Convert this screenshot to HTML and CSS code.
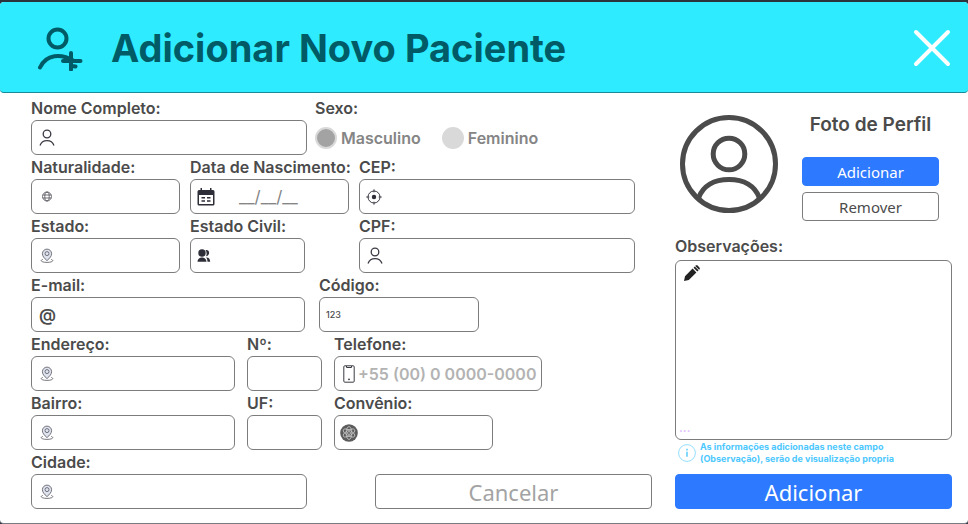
FILE: index.html
```html
<!DOCTYPE html>
<html lang="pt-BR">
<head>
<meta charset="utf-8">
<meta name="viewport" content="width=device-width, initial-scale=1">
<title>Adicionar Novo Paciente</title>
<link rel="stylesheet" href="styles.css">
</head>
<body>
<svg class="sprite" aria-hidden="true">
  <symbol id="user" viewBox="0 0 16 18"><circle cx="8" cy="5" r="3.8"/><path d="M1 16.400c1.200-3.200 3.800-4.800 7-4.800s5.800 1.600 7 4.800"/></symbol>
  <symbol id="pin" viewBox="0 0 14 16"><path class="pin-body" d="M7 12.600C4.200 10.300 2.400 8 2.400 5.700a4.600 4.600 0 0 1 9.200 0c0 2.300-1.800 4.600-4.600 6.900z"/><circle cx="7" cy="5.600" r="2"/><path d="M2.800 11.400C-.4 12.400 1.500 14.400 7 14.400s7.400-2 4.200-3"/></symbol>
</svg>
<main class="dialog">
  <header class="header">
    <svg class="header-icon" viewBox="0 0 46 46" aria-hidden="true"><circle cx="20.500" cy="13.500" r="9"/><path d="M3 42.500C9 29 24 28 37 36M34 28v16.500M26 36h17.500M35 41l3.500.5"/></svg>
    <h1 class="title">Adicionar Novo Paciente</h1>
    <button class="close" type="button" aria-label="Fechar"><svg viewBox="0 0 38 38"><path d="M3 3l32 32M35 3L3 35"/></svg></button>
  </header>
  <form class="form">
    <div class="fields">
      <div class="row row-name">
        <div class="field">
          <label for="nome">Nome Completo:</label>
          <div class="box"><svg class="icon icon-user"><use href="#user"/></svg><input id="nome" type="text"></div>
        </div>
        <fieldset class="field">
          <legend>Sexo:</legend>
          <div class="choices">
            <label class="choice"><input type="radio" name="sexo" checked>Masculino</label>
            <label class="choice"><input type="radio" name="sexo">Feminino</label>
          </div>
        </fieldset>
      </div>
      <div class="row row-birth">
        <div class="field">
          <label for="naturalidade">Naturalidade:</label>
          <div class="box"><svg class="icon icon-thin" viewBox="0 0 16 16"><circle cx="8" cy="7.500" r="4.500"/><ellipse cx="8" cy="7.500" rx="2.200" ry="4.500"/><path d="M3.800 6h8.400M3.800 9h8.400"/></svg><input id="naturalidade" type="text"></div>
        </div>
        <div class="field">
          <label for="nascimento">Data de Nascimento:</label>
          <div class="box box-tight"><svg class="icon icon-calendar" viewBox="0 0 18 18"><path class="solid" fill-rule="evenodd" d="M3.500 0H5v2h8V0h1.500v2H16a1.500 1.500 0 0 1 1.500 1.500V16a1.500 1.500 0 0 1-1.500 1.500H2A1.500 1.500 0 0 1 .5 16V3.500A1.500 1.500 0 0 1 2 2h1.500zM2 7v9h14V7z"/><path class="solid" d="M4.500 9h3.500v1.500H4.500zM10 9h3.500v1.500H10zM4.500 12.300h3.500v1.500H4.500zM10 12.300h3.500v1.500H10z"/></svg><input class="date" id="nascimento" type="text" placeholder="__/__/__"></div>
        </div>
        <div class="field">
          <label for="cep">CEP:</label>
          <div class="box box-tight"><svg class="icon icon-target" viewBox="0 0 16 16"><circle cx="8" cy="8" r="6"/><circle class="solid" cx="8" cy="8" r="2.200"/><path d="M8 .3v3M8 12.700v3M.3 8h3M12.700 8h3"/></svg><input id="cep" type="text"></div>
        </div>
      </div>
      <div class="row row-state">
        <div class="field">
          <label for="estado">Estado:</label>
          <div class="box"><svg class="icon icon-pin"><use href="#pin"/></svg><input id="estado" type="text"></div>
        </div>
        <div class="field">
          <label for="civil">Estado Civil:</label>
          <div class="box box-tight"><svg class="icon icon-couple" viewBox="0 0 14 16"><circle class="solid" cx="5" cy="5" r="3.700"/><path class="solid" d="M8.500 2c4.500-1 5 5.500.5 6.300 1-2 .8-4.300-.5-6.300zM.5 13.800C.8 10.600 3 9.600 5 9.600s4.200 1 4.500 4.200zM9 9.600c2.800-.2 4 1.300 4.200 4.200h-2.700c-.1-1.900-.4-3.100-1.500-4.200z"/></svg><input id="civil" type="text"></div>
        </div>
        <div class="field">
          <label for="cpf">CPF:</label>
          <div class="box"><svg class="icon icon-user"><use href="#user"/></svg><input id="cpf" type="text"></div>
        </div>
      </div>
      <div class="row row-mail">
        <div class="field">
          <label for="email">E-mail:</label>
          <div class="box"><span class="at" aria-hidden="true">@</span><input id="email" type="text"></div>
        </div>
        <div class="field">
          <label for="codigo">Código:</label>
          <div class="box box-tight"><span class="digits" aria-hidden="true">123</span><input id="codigo" type="text"></div>
        </div>
      </div>
      <div class="row row-address">
        <div class="field">
          <label for="endereco">Endereço:</label>
          <div class="box"><svg class="icon icon-pin"><use href="#pin"/></svg><input id="endereco" type="text"></div>
        </div>
        <div class="field">
          <label for="numero">Nº:</label>
          <div class="box"><input id="numero" type="text"></div>
        </div>
        <div class="field">
          <label for="telefone">Telefone:</label>
          <div class="box box-phone"><svg class="icon icon-phone" viewBox="0 0 12 18"><rect x=".8" y=".8" width="10.400" height="16.400" rx="1"/><path d="M3.500 1v1.500h5V1"/><circle class="solid" cx="6" cy="14.300" r=".9"/></svg><input id="telefone" type="tel" placeholder="+55 (00) 0 0000-0000"></div>
        </div>
      </div>
      <div class="row row-district">
        <div class="field">
          <label for="bairro">Bairro:</label>
          <div class="box"><svg class="icon icon-pin"><use href="#pin"/></svg><input id="bairro" type="text"></div>
        </div>
        <div class="field">
          <label for="uf">UF:</label>
          <div class="box"><input id="uf" type="text"></div>
        </div>
        <div class="field">
          <label for="convenio">Convênio:</label>
          <div class="box box-plan"><svg class="icon icon-plan" viewBox="0 0 18 18"><circle class="disc" cx="9" cy="9" r="8.800"/><g class="orbits"><ellipse cx="9" cy="9" rx="2.800" ry="6.500"/><ellipse cx="9" cy="9" rx="2.800" ry="6.500" transform="rotate(60 9 9)"/><ellipse cx="9" cy="9" rx="2.800" ry="6.500" transform="rotate(120 9 9)"/><circle cx="9" cy="9" r="1.500"/></g></svg><input id="convenio" type="text"></div>
        </div>
      </div>
      <div class="row row-city">
        <div class="field">
          <label for="cidade">Cidade:</label>
          <div class="box"><svg class="icon icon-pin"><use href="#pin"/></svg><input id="cidade" type="text"></div>
        </div>
        <button class="btn btn-large btn-cancel" type="button">Cancelar</button>
      </div>
    </div>
    <div class="side">
      <section class="profile">
        <svg class="avatar" viewBox="0 0 98 98" aria-hidden="true"><circle cx="49" cy="49" r="46.500"/><circle cx="49" cy="39" r="15.800"/><path d="M18.500 83C23 71 34 64.500 49 64.500S75 71 79.500 83"/></svg>
        <div class="photo">
          <h2>Foto de Perfil</h2>
          <button class="btn btn-primary" type="button">Adicionar</button>
          <button class="btn" type="button">Remover</button>
        </div>
      </section>
      <label for="obs">Observações:</label>
      <div class="notes">
        <svg class="pencil" viewBox="0 0 16 16" aria-hidden="true"><path d="M0 16l1-4.800L8.600 3.600l3.800 3.800L4.800 15zM9.500 2.700l1.300-1.300 3.800 3.800-1.300 1.300zM11.600.6c.6-.6 1.400-.6 2 0l1.800 1.800c.6.600.6 1.400 0 2l-.3.300L11.300.900z"/></svg>
        <textarea id="obs"></textarea>
        <span class="dots" aria-hidden="true">...</span>
      </div>
      <div class="hint">
        <svg viewBox="0 0 18 18" aria-hidden="true"><circle cx="9" cy="9" r="8.400"/><path d="M9 7.700v5M9 4.800v1.600"/></svg>
        <p>As informações adicionadas neste campo<br>(Observação), serão de visualização propria</p>
      </div>
      <button class="btn btn-large btn-primary" type="submit">Adicionar</button>
    </div>
  </form>
</main>
</body>
</html>
```
FILE: styles.css
```css
* {
  box-sizing: border-box;
}

body {
  margin: 0;
  min-height: 100vh;
  padding-top: 2px;
  display: flex;
  background: #2b343c;
  color: #4b4b4b;
  font-family: Inter, "Liberation Sans", sans-serif;
  font-size: 16px;
  font-weight: 600;
}

.sprite {
  position: absolute;
  width: 0;
  height: 0;
}

.dialog {
  flex: 1;
  background: #fff;
  border-bottom: 1px solid #777b80;
  border-radius: 4px;
}

.header {
  display: flex;
  align-items: center;
  height: 91px;
  padding: 2px 17px 0 37px;
  background: #2eebff;
  border-bottom: 1px solid #178c98;
  border-radius: 4px;
}

.header-icon {
  width: 46px;
  height: 46px;
  margin-right: 28px;
  fill: none;
  stroke: #005b66;
  stroke-width: 4;
  stroke-linecap: round;
}

.title {
  margin: 0;
  flex: 1;
  color: #005b66;
  font-size: 38px;
  line-height: 48px;
  font-weight: 700;
}

.close {
  width: 38px;
  height: 38px;
  padding: 0;
  border: 0;
  background: none;
}

.close svg {
  display: block;
  fill: none;
  stroke: #fff;
  stroke-width: 4;
  stroke-linecap: round;
}

.form {
  display: grid;
  grid-template-columns: 621fr 277fr;
  column-gap: 23px;
  padding: 3px 16px 14px 31px;
}

.row {
  display: grid;
  column-gap: 10px;
}

.row-name { grid-template-columns: 276fr 337fr; column-gap: 8px; }
.row-birth { grid-template-columns: 149fr 159fr 276fr 7fr; column-gap: 10px; }
.row-state { grid-template-columns: 149fr 115fr 34fr 276fr 7fr; }
.row-state .field:last-child { grid-column: 4; }
.row-mail { grid-template-columns: 274fr 160fr 159fr; column-gap: 14px; }
.row-address { grid-template-columns: 204fr 75fr 208fr 98fr; column-gap: 12px; }
.row-district { grid-template-columns: 204fr 75fr 159fr 147fr; column-gap: 12px; }
.row-city { grid-template-columns: 276fr 277fr; column-gap: 68px; align-items: end; }

.field {
  min-width: 0;
  margin: 0;
  padding: 0;
  border: 0;
}

.field > label,
.side > label,
legend {
  display: block;
  padding: 0;
  line-height: 24px;
  white-space: nowrap;
}

.box {
  display: flex;
  align-items: center;
  gap: 6px;
  height: 35px;
  padding: 0 7px;
  border: 1px solid #7c7c7c;
  border-radius: 6px;
}

.box-tight {
  padding: 0 6px;
}

.box-plan {
  padding: 0 5px;
}

.box-phone {
  gap: 2px;
  padding: 0 2px 0 7px;
}

input,
textarea {
  font: inherit;
  color: inherit;
}

.box input {
  flex: 1;
  width: 0;
  height: 100%;
  padding: 0;
  border: 0;
  outline: 0;
  background: none;
}

.box input::placeholder {
  color: #b3b3b3;
  opacity: 1;
}

.box .date {
  text-indent: 18px;
  font-size: 17px;
  font-weight: 400;
}

.box .date::placeholder {
  color: #858585;
}

.icon {
  flex: none;
  width: 16px;
  height: 16px;
  fill: none;
  stroke: #3a3a44;
}

.solid {
  fill: #2d2e38;
  stroke: none;
}

.icon-user { height: 18px; stroke-width: 1.3; }
.icon-thin { stroke-width: 0.7; }
.icon-pin { width: 14px; margin: 0 1px; stroke: #55565f; stroke-width: 0.8; }
.pin-body { fill: #dfe3ee; }
.icon-calendar { width: 18px; height: 18px; }
.icon-couple { width: 14px; }
.icon-phone { width: 12px; height: 18px; margin: 0 1px; }
.icon-plan { width: 18px; height: 18px; }
.disc { fill: #5c5c5c; stroke: none; }
.orbits { stroke: #d4d4d4; stroke-width: 0.7; }

.at {
  font-size: 17px;
}

.digits {
  font-size: 9px;
  font-weight: 500;
}

.choices {
  display: flex;
  align-items: center;
  gap: 21px;
  height: 35px;
}

.choice {
  display: flex;
  align-items: center;
  gap: 4px;
  color: #858585;
}

.choice input {
  appearance: none;
  width: 22px;
  height: 22px;
  margin: 0;
  border: 2px solid #d9d9d9;
  border-radius: 50%;
  background: #d9d9d9;
}

.choice input:checked {
  background: #a3a3a3;
}

.btn {
  width: 100%;
  height: 29px;
  padding: 0;
  border: 1px solid #7c7c7c;
  border-radius: 4px;
  background: #fff;
  color: #4b4b4b;
  font-family: "Noto Sans", sans-serif;
  font-size: 15px;
  font-weight: 400;
}

.btn-primary {
  border-color: #2d79ff;
  background: #2d79ff;
  color: #fff;
}

.btn-large {
  height: 35px;
  font-size: 22px;
  line-height: 32px;
}

.btn-cancel {
  color: #a3a3a3;
}

.side {
  display: flex;
  flex-direction: column;
}

.profile {
  display: flex;
  justify-content: space-between;
  padding: 17px 13px 13px 5px;
}

.avatar {
  width: 98px;
  height: 98px;
  margin-top: 2px;
  fill: none;
  stroke: #4b4b4b;
  stroke-width: 5;
}

.photo {
  display: flex;
  flex-direction: column;
  gap: 6px;
  width: 137px;
}

.photo h2 {
  margin: 0 0 14px;
  font-size: 19px;
  line-height: 24px;
  font-weight: 600;
  text-align: center;
  white-space: nowrap;
}

.notes {
  position: relative;
  flex: 1;
  display: flex;
  margin-top: 2px;
  border: 1px solid #7c7c7c;
  border-radius: 6px;
}

.notes textarea {
  flex: 1;
  padding: 4px 8px 16px 30px;
  border: 0;
  outline: 0;
  background: none;
  resize: none;
}

.pencil {
  position: absolute;
  top: 4px;
  left: 8px;
  width: 16px;
  height: 16px;
  fill: #222;
}

.dots {
  position: absolute;
  bottom: 4px;
  left: 3px;
  color: #dcb8ff;
  font-size: 12px;
  line-height: 14px;
}

.hint {
  display: flex;
  align-items: center;
  gap: 4px;
  height: 34px;
  padding: 0 0 8px 3px;
  color: #4dc8ff;
  font-size: 9px;
  line-height: 12px;
  font-weight: 700;
}

.hint svg {
  flex: none;
  width: 18px;
  height: 18px;
  fill: none;
  stroke: #4dc8ff;
}

.hint svg circle { stroke-width: 0.6; }
.hint svg path { stroke-width: 1.4; }

.hint p {
  margin: 0;
  white-space: nowrap;
}
```
